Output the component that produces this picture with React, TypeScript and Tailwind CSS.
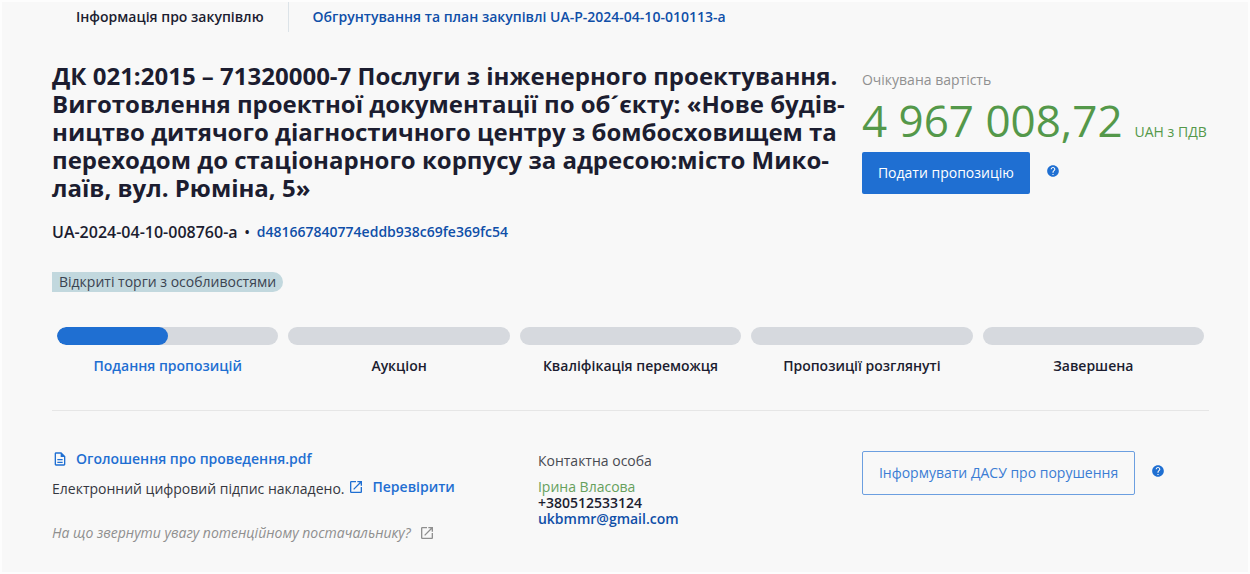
import React from 'react';
import { MdHelp, MdOpenInNew, MdOutlineDescription } from 'react-icons/md';

interface Stage {
  label: string;
  progress: number;
}

const stages: Stage[] = [
  { label: 'Подання пропозицій', progress: 50 },
  { label: 'Аукціон', progress: 0 },
  { label: 'Кваліфікація переможця', progress: 0 },
  { label: 'Пропозиції розглянуті', progress: 0 },
  { label: 'Завершена', progress: 0 },
];

const HelpButton: React.FC<{ label: string }> = ({ label }) => (
  <button type="button" aria-label={label} className="pb-1 text-[#1f6fd2]">
    <MdHelp size={14} />
  </button>
);

const TopTabs: React.FC = () => (
  <nav className="flex h-[30px] text-sm leading-[30px] font-semibold">
    <a href="#info" className="border-r border-[#dce3e8] px-6">
      Інформація про закупівлю
    </a>
    <a href="#plan" className="px-6 text-[#0f4fa8]">
      Обгрунтування та план закупівлі UA-P-2024-04-10-010113-a
    </a>
  </nav>
);

const StageBar: React.FC<{ stage: Stage }> = ({ stage }) => (
  <li>
    <div className="h-[18px] overflow-hidden rounded-full bg-[#d6d9de]">
      {stage.progress > 0 && (
        <div className="h-full rounded-full bg-[#1f6fd2]" style={{ width: `${stage.progress}%` }} />
      )}
    </div>
    <p className={`mt-[11px] text-center text-sm font-semibold ${stage.progress > 0 ? 'text-[#1f6fd2]' : ''}`}>
      {stage.label}
    </p>
  </li>
);

const App: React.FC = () => {
  return (
    <div className="min-h-screen border-2 border-[#fdfdfd] bg-[#f8f8f8] pr-[39px] pb-7 pl-[50px] font-['Open_Sans','Noto_Sans',sans-serif] text-sm text-[#1c1d30]">
      <TopTabs />

      <div className="mt-[30px] grid grid-cols-[7fr_3fr]">
        <section>
          <h1 className="pr-3 text-2xl leading-7 font-bold">
            ДК 021:2015 – 71320000-7 Послуги з інженерного проектування. Виготовлення проектної
            документації по об´єкту: «Нове будів&shy;ництво дитячого діагностичного центру з
            бомбосховищем та переходом до стаціонарного корпусу за адресою:місто Мико&shy;лаїв,
            вул. Рюміна, 5»
          </h1>
          <div className="mt-[18px] flex items-center gap-[7px] font-semibold">
            <span className="text-base">UA-2024-04-10-008760-a</span>
            <span>•</span>
            <a href="#hash" className="text-[#0f4fa8]">
              d481667840774eddb938c69fe369fc54
            </a>
          </div>
          <span className="mt-7 inline-block rounded-l-xs rounded-r-full bg-[#c2d8de] px-[7px] text-[#3a4350]">
            Відкриті торги з особливостями
          </span>
        </section>

        <section>
          <p className="mt-2 text-[#909090]">Очікувана вартість</p>
          <p className="flex items-baseline gap-3 whitespace-nowrap text-[#54984a]">
            <span className="text-[44px] leading-[60px]">4 967 008,72</span>
            <span>UAH з ПДВ</span>
          </p>
          <div className="mt-0.5 flex items-center gap-4">
            <button type="button" className="h-[42px] rounded-xs bg-[#1f6fd2] px-4 text-white">
              Подати пропозицію
            </button>
            <HelpButton label="Довідка про подання пропозиції" />
          </div>
        </section>
      </div>

      <ol className="mt-[35px] grid grid-cols-5 gap-[10px] px-[5px]">
        {stages.map((stage) => (
          <StageBar key={stage.label} stage={stage} />
        ))}
      </ol>

      <hr className="mt-[34px] border-[#e6e6e6]" />

      <div className="mt-10 grid grid-cols-[42fr_28fr_30fr]">
        <section>
          <a href="#pdf" className="flex items-center gap-2 leading-4 font-semibold text-[#1f6fd2]">
            <MdOutlineDescription size={16} />
            Оголошення про проведення.pdf
          </a>
          <div className="mt-[10px] flex items-center gap-1 text-[#35373f]">
            <span>Електронний цифровий підпис накладено.</span>
            <a href="#check" className="flex items-center gap-2 pb-1 font-semibold text-[#1f6fd2]">
              <MdOpenInNew size={16} />
              Перевірити
            </a>
          </div>
          <a href="#tips" className="mt-[22px] flex items-center gap-2 text-[#8f8f8f] italic">
            На що звернути увагу потенційному постачальнику?
            <MdOpenInNew size={16} />
          </a>
        </section>

        <section>
          <h2 className="text-[#484a52]">Контактна особа</h2>
          <address className="mt-2 flex flex-col items-start leading-4 font-semibold not-italic">
            <span className="font-normal text-[#66a05c]">Ірина Власова</span>
            <a href="tel:+380512533124">+380512533124</a>
            <a href="mailto:ukbmmr@gmail.com" className="text-[#0f4fa8]">
              ukbmmr@gmail.com
            </a>
          </address>
        </section>

        <section className="flex items-start">
          <div className="flex items-center gap-4">
            <button type="button" className="h-11 rounded-xs border border-[#6c9fe0] px-4 text-[#3b7dd4]">
              Інформувати ДАСУ про порушення
            </button>
            <HelpButton label="Довідка про звернення до ДАСУ" />
          </div>
        </section>
      </div>
    </div>
  );
};

export default App;
